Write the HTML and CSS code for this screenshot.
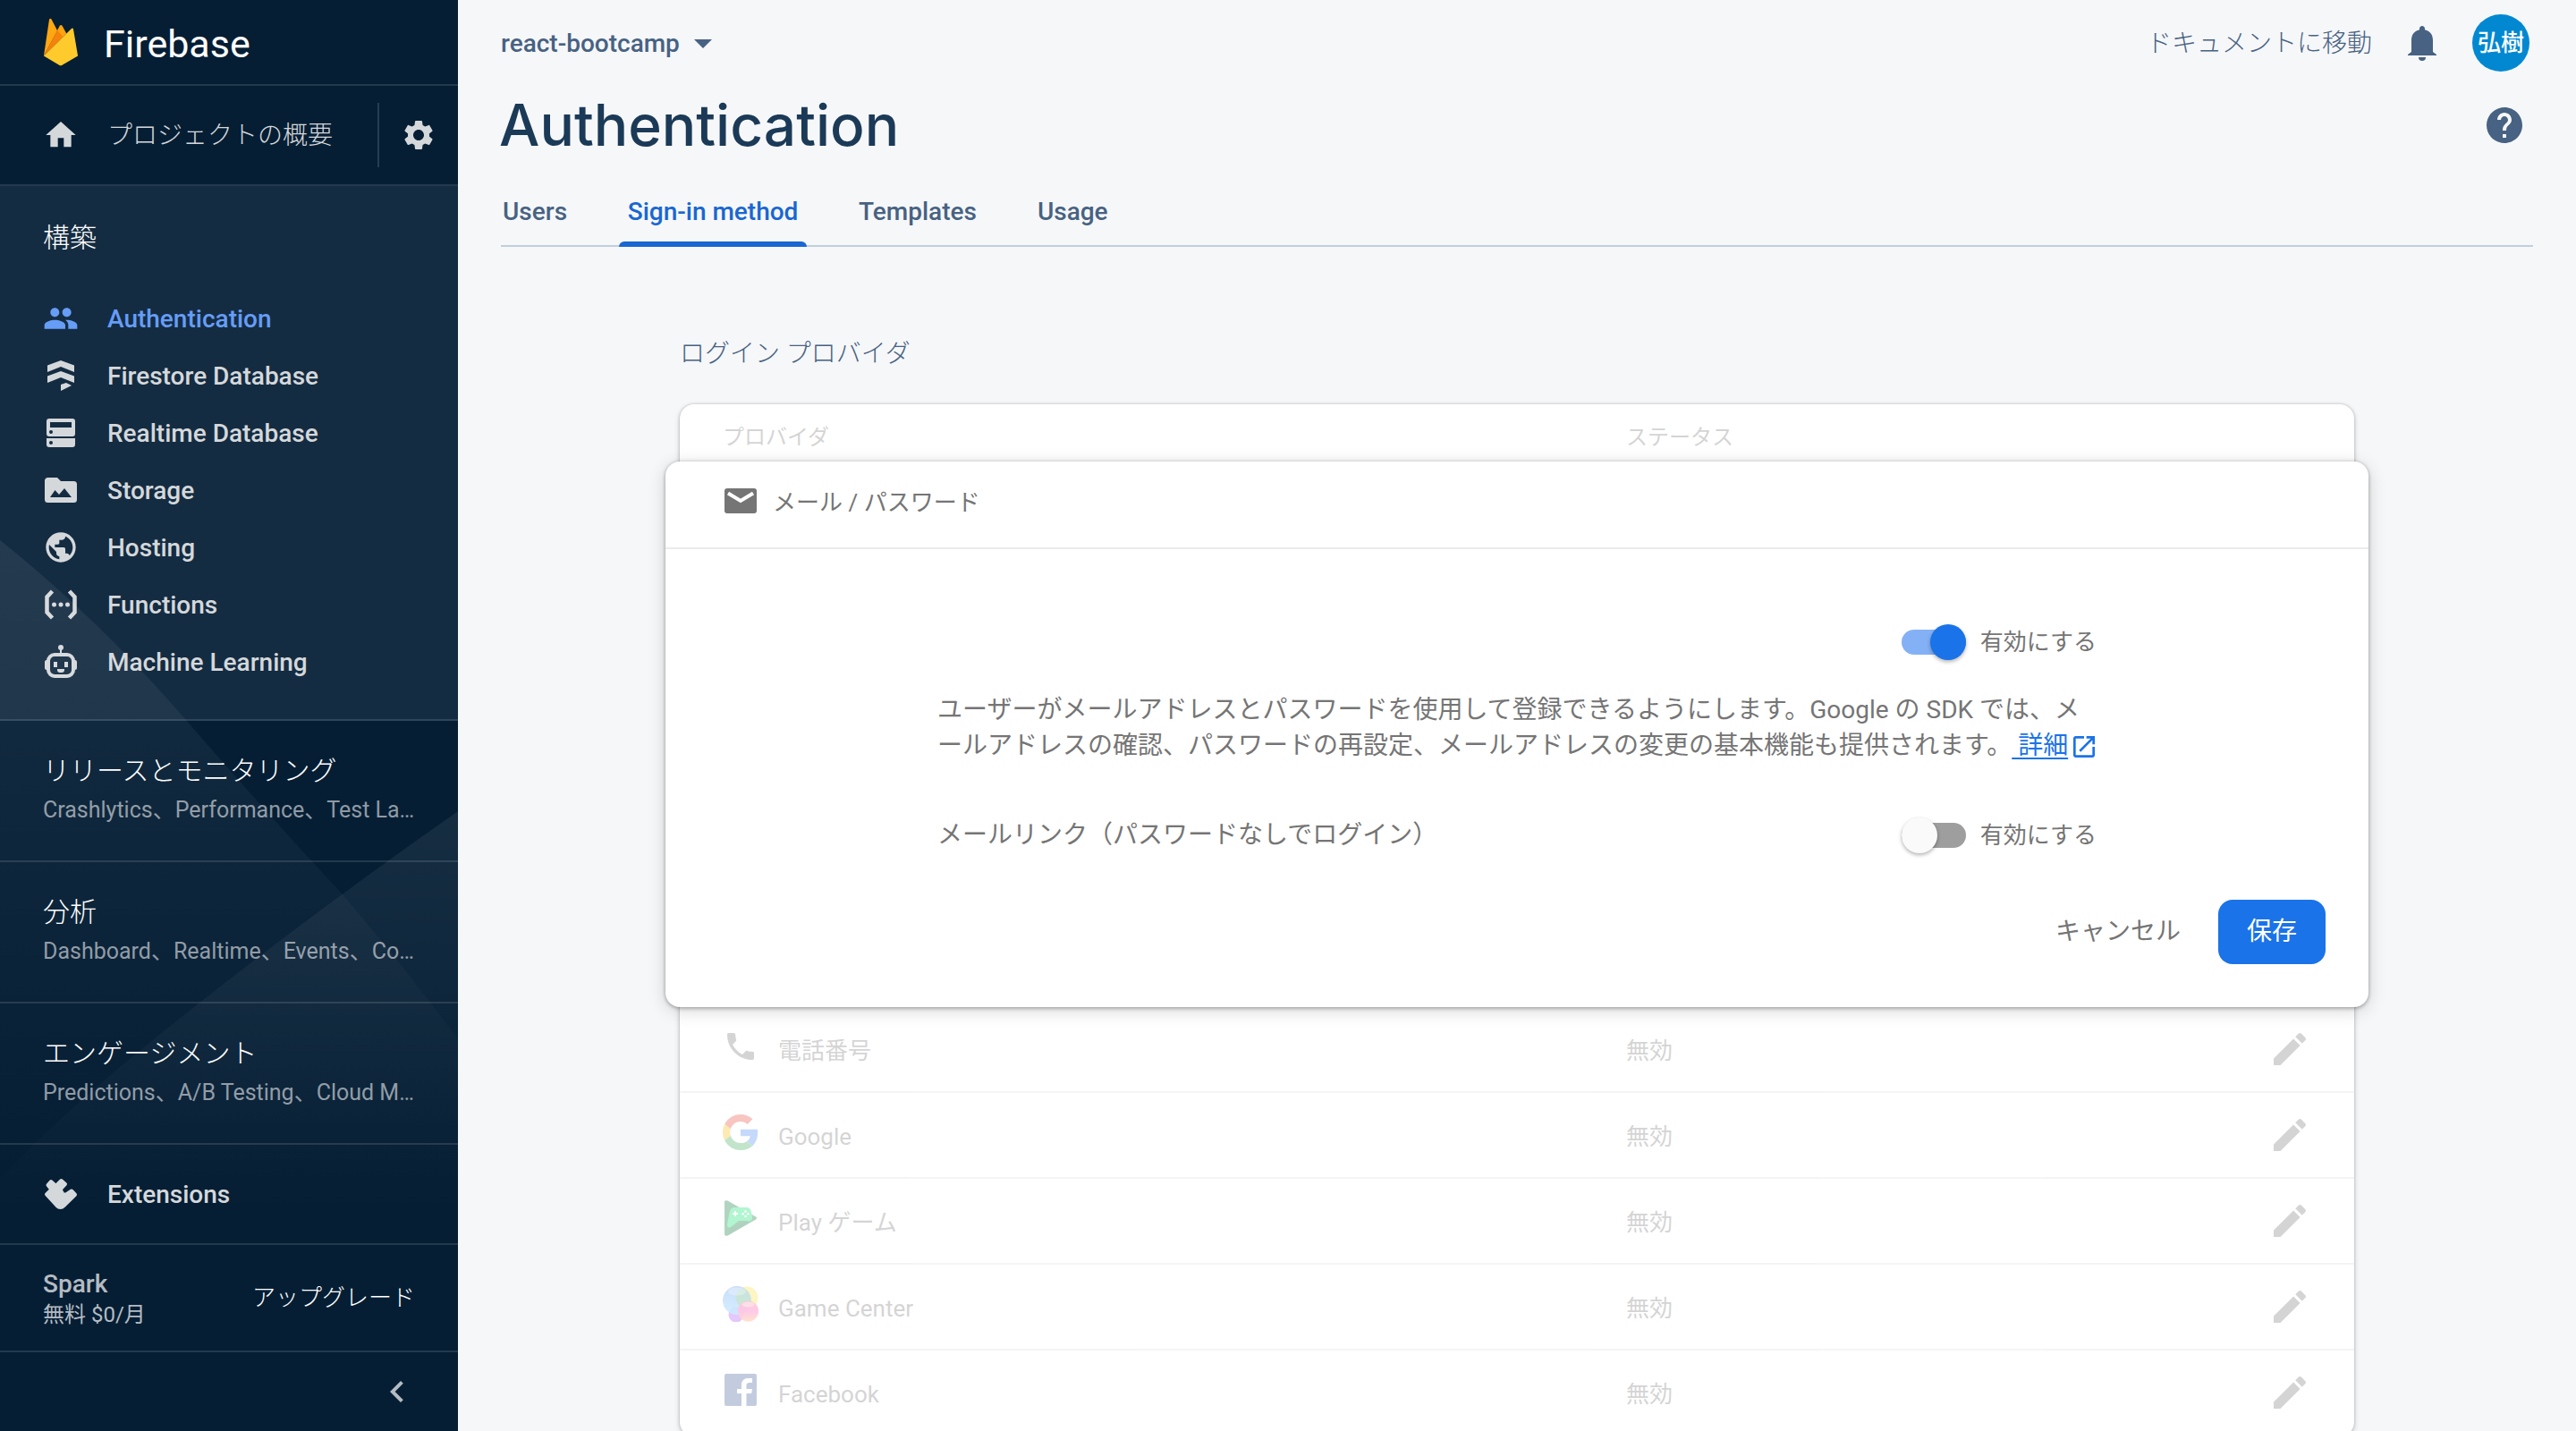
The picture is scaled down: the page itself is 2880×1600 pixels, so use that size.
FILE: index.html
```html
<!DOCTYPE html>
<html lang="ja">
<head>
<meta charset="utf-8">
<title>Authentication - Firebase</title>
<link rel="stylesheet" href="styles.css">
</head>
<body>
<div class="app">
  <aside class="sidebar">
    <svg class="backdrop" viewBox="0 0 512 1000" aria-hidden="true">
      <defs>
        <linearGradient id="g1" gradientUnits="userSpaceOnUse" x1="0" y1="0" x2="0" y2="720"><stop offset="0" stop-color="#fff" stop-opacity=".07"/><stop offset="1" stop-color="#fff" stop-opacity="0"/></linearGradient>
        <linearGradient id="g2" gradientUnits="userSpaceOnUse" x1="0" y1="300" x2="0" y2="760"><stop offset="0" stop-color="#fff" stop-opacity=".07"/><stop offset="1" stop-color="#fff" stop-opacity="0"/></linearGradient>
      </defs>
      <path d="M0 4Q110 92 207 204T381 398Q450 478 512 562V1000H0z" fill="url(#g1)"/>
      <path d="M512 307Q370 406 222 522T0 718V1000H512z" fill="url(#g2)"/>
    </svg>
    <a class="brand" href="#">
      <svg class="brand-mark" viewBox="147 58 115 160" aria-hidden="true">
        <path d="M148 184L166 64Q168 57 173 62L193 100z" fill="#ffa712"/>
        <path d="M193 99L201 84Q205 79 209 84L223 110L200 132z" fill="#ffa40f"/>
        <path d="M148 184L193 99L212 121z" fill="#f4820c"/>
        <path d="M148 184L239 94Q245 89 246 96L261 184L209 214Q204 217 199 214z" fill="#ffca2c"/>
      </svg>
      <span class="brand-name">Firebase</span>
    </a>
    <div class="project-row">
      <a class="nav-link" href="#">
        <svg class="icon" viewBox="0 0 24 24"><path d="M10 20v-6h4v6h5v-8h3L12 3 2 12h3v8z"/></svg>
        <span>プロジェクトの概要</span>
      </a>
      <button class="settings" type="button" aria-label="設定">
        <svg class="icon" viewBox="0 0 24 24"><path d="M19.14 12.94c.04-.3.06-.61.06-.94 0-.32-.02-.64-.07-.94l2.03-1.58c.18-.14.23-.41.12-.61l-1.92-3.32c-.12-.22-.37-.29-.59-.22l-2.39.96c-.5-.38-1.03-.7-1.62-.94l-.36-2.54c-.04-.24-.24-.41-.48-.41h-3.84c-.24 0-.43.17-.47.41l-.36 2.54c-.59.24-1.13.57-1.62.94l-2.39-.96c-.22-.08-.47 0-.59.22L2.74 8.87c-.12.21-.08.47.12.61l2.03 1.58c-.05.3-.09.63-.09.94s.02.64.07.94l-2.03 1.58c-.18.14-.23.41-.12.61l1.92 3.32c.12.22.37.29.59.22l2.39-.96c.5.38 1.03.7 1.62.94l.36 2.54c.05.24.24.41.48.41h3.84c.24 0 .44-.17.47-.41l.36-2.54c.59-.24 1.13-.56 1.62-.94l2.39.96c.22.08.47 0 .59-.22l1.92-3.32c.12-.22.07-.47-.12-.61l-2.01-1.58zM12 15.6c-1.98 0-3.6-1.62-3.6-3.6s1.62-3.6 3.6-3.6 3.6 1.62 3.6 3.6-1.62 3.6-3.6 3.6z"/></svg>
      </button>
    </div>
    <nav class="build">
      <h2 class="group-title">構築</h2>
      <a class="nav-link active" href="#">
        <svg class="icon" viewBox="0 0 24 24"><path d="M16 11c1.66 0 2.99-1.34 2.99-3S17.66 5 16 5c-1.66 0-3 1.34-3 3s1.34 3 3 3zm-8 0c1.66 0 2.99-1.34 2.99-3S9.66 5 8 5C6.34 5 5 6.34 5 8s1.34 3 3 3zm0 2c-2.33 0-7 1.17-7 3.5V19h14v-2.500c0-2.330-4.670-3.500-7-3.500zm8 0c-.29 0-.62.02-.97.05 1.16.84 1.970 1.970 1.970 3.450V19h6v-2.500c0-2.330-4.670-3.500-7-3.500z"/></svg>
        <span>Authentication</span>
      </a>
      <a class="nav-link" href="#">
        <svg class="icon" viewBox="0 0 40 40"><path d="M5 8.500L20 3l15 5.500V16L20 10 5 16zM5 20.500L20 15l15 5.500V28L20 22 5 28zM20 30l6-2 6 3-12 6z"/></svg>
        <span>Firestore Database</span>
      </a>
      <a class="nav-link" href="#">
        <svg class="icon" viewBox="0 0 40 40"><path fill-rule="evenodd" d="M7 4h26a3 3 0 0 1 3 3v14a3 3 0 0 1-3 3H7a3 3 0 0 1-3-3V7a3 3 0 0 1 3-3zm1 4v6h24V8zm1 9a2 2 0 1 0 0 4 2 2 0 0 0 0-4zM4 26h32v7a3 3 0 0 1-3 3H7a3 3 0 0 1-3-3zm5 3a2 2 0 1 0 0 4 2 2 0 0 0 0-4z"/></svg>
        <span>Realtime Database</span>
      </a>
      <a class="nav-link" href="#">
        <svg class="icon" viewBox="0 0 40 40"><path fill-rule="evenodd" d="M6 6h10l4 4h14.500a3.500 3.500 0 0 1 3.500 3.500V30.500a3.500 3.500 0 0 1-3.500 3.500h-29A3.500 3.500 0 0 1 2 30.500V9.500A3.500 3.500 0 0 1 6 6zm2 22h24l-8-10-6 7-4.500-5z"/></svg>
        <span>Storage</span>
      </a>
      <a class="nav-link" href="#">
        <svg class="icon" viewBox="0 0 24 24"><path d="M12 2C6.480 2 2 6.480 2 12s4.480 10 10 10 10-4.480 10-10S17.520 2 12 2zm-1 17.930c-3.950-.49-7-3.850-7-7.930 0-.62.08-1.210.21-1.790L9 15v1c0 1.100.9 2 2 2v1.930zm6.900-2.540c-.26-.81-1-1.390-1.900-1.390h-1v-3c0-.55-.45-1-1-1H8v-2h2c.55 0 1-.45 1-1V7h2c1.100 0 2-.9 2-2v-.41c2.930 1.190 5 4.060 5 7.410 0 2.080-.8 3.970-2.100 5.390z"/></svg>
        <span>Hosting</span>
      </a>
      <a class="nav-link" href="#">
        <svg class="icon" viewBox="0 0 40 40"><path d="M10.500 5L4.500 11.500V28.500L10.500 35M29.500 5L35.500 11.500V28.500L29.500 35" fill="none" stroke="currentColor" stroke-width="4.500"/><circle cx="12.500" cy="20" r="2.500"/><circle cx="20" cy="20" r="2.500"/><circle cx="27.500" cy="20" r="2.500"/></svg>
        <span>Functions</span>
      </a>
      <a class="nav-link" href="#">
        <svg class="icon" viewBox="0 0 40 40"><rect x="6" y="12" width="28" height="24" rx="7" fill="none" stroke="currentColor" stroke-width="4"/><circle cx="20" cy="4" r="3"/><path d="M19 5h2v6h-2zM5 18v11H4a2 2 0 0 1-2-2v-7a2 2 0 0 1 2-2zM35 18v11h1a2 2 0 0 0 2-2v-7a2 2 0 0 0-2-2zM12 20h4v6h-4zM24 20h4v6h-4zM16 28h8v1a3 3 0 0 1-3 3h-2a3 3 0 0 1-3-3z"/></svg>
        <span>Machine Learning</span>
      </a>
    </nav>
    <a class="category" href="#"><span class="category-title">リリースとモニタリング</span><span class="category-items">Crashlytics、Performance、Test La…</span></a>
    <a class="category" href="#"><span class="category-title">分析</span><span class="category-items">Dashboard、Realtime、Events、Co…</span></a>
    <a class="category" href="#"><span class="category-title">エンゲージメント</span><span class="category-items">Predictions、A/B Testing、Cloud M…</span></a>
    <div class="extensions">
      <a class="nav-link" href="#">
        <svg class="icon" viewBox="0 0 40 40"><path d="M4 20.500L9.500 15 5.500 10 9 6 14.500 11 20.500 5 25 9 19.500 15 22.500 20.500 26 20.500 32 16.500 36 20.700 23.500 33Q19.500 37 15.500 33z" stroke="currentColor" stroke-width="4" stroke-linejoin="round"/></svg>
        <span>Extensions</span>
      </a>
    </div>
    <div class="plan">
      <div class="plan-info"><strong class="plan-name">Spark</strong><span class="plan-price">無料 $0/月</span></div>
      <a class="upgrade" href="#">アップグレード</a>
    </div>
    <div class="collapse-row">
      <button class="collapse" type="button" aria-label="メニューを閉じる"><svg class="icon-l" viewBox="0 0 24 24"><path d="M15.410 7.410L14 6l-6 6 6 6 1.410-1.410L10.830 12z"/></svg></button>
    </div>
  </aside>

  <main class="main">
    <header class="topbar">
      <button class="project" type="button">react-bootcamp<svg class="caret" viewBox="0 0 20 10" aria-hidden="true"><path d="M0 0h20L10 10z"/></svg></button>
      <div class="topbar-actions">
        <a class="docs" href="#">ドキュメントに移動</a>
        <button class="plain" type="button" aria-label="通知"><svg class="icon-l" viewBox="0 0 24 24"><path d="M18 17v-6.500c0-3.070-1.640-5.140-4.500-5.820V4c0-.83-.67-1.500-1.500-1.500s-1.500.67-1.500 1.500v.68C7.630 5.360 6 7.420 6 10.500V17l-2 1.500V19h16v-.5zM10 20h4a2 2 0 0 1-4 0z"/></svg></button>
        <button class="avatar" type="button">弘樹</button>
      </div>
    </header>
    <div class="title-row">
      <h1 class="title">Authentication</h1>
      <button class="plain" type="button" aria-label="ヘルプ"><svg class="icon-l" viewBox="0 0 24 24"><path d="M12 2C6.480 2 2 6.480 2 12s4.480 10 10 10 10-4.480 10-10S17.520 2 12 2zm1 17h-2v-2h2v2zm2.070-7.750l-.9.920C13.450 12.900 13 13.500 13 15h-2v-.5c0-1.100.45-2.100 1.170-2.830l1.240-1.260c.37-.36.59-.86.59-1.410 0-1.100-.9-2-2-2s-2 .9-2 2H8c0-2.210 1.790-4 4-4s4 1.790 4 4c0 .88-.36 1.680-.93 2.250z"/></svg></button>
    </div>
    <nav class="tabs">
      <a class="tab" href="#">Users</a>
      <a class="tab current" href="#">Sign-in method</a>
      <a class="tab" href="#">Templates</a>
      <a class="tab" href="#">Usage</a>
    </nav>

    <section class="content">
      <h2 class="section-title">ログイン プロバイダ</h2>
      <div class="card">
        <table class="providers">
          <thead>
            <tr class="faded"><th class="col-name">プロバイダ</th><th>ステータス</th><th class="col-edit"></th></tr>
          </thead>
          <tbody>
            <tr>
              <td class="expanded" colspan="3">
                <form class="panel">
                  <div class="panel-head">
                    <svg class="provider-icon" viewBox="0 0 40 40" aria-hidden="true"><rect x="2" y="2" width="36" height="28" rx="3"/><path d="M6 7.500L20 16L34 7.500" fill="none" stroke="#fff" stroke-width="4"/></svg>
                    <span>メール / パスワード</span>
                  </div>
                  <div class="panel-body">
                    <div class="option option-end">
                      <label class="switch-label"><input class="switch" type="checkbox" role="switch" checked>有効にする</label>
                    </div>
                    <p class="description">ユーザーがメールアドレスとパスワードを使用して登録できるようにします。Google の SDK では、メールアドレスの確認、パスワードの再設定、メールアドレスの変更の基本機能も提供されます。<a class="more" href="#">&nbsp;詳細<svg class="external" viewBox="3 3 18 18" aria-hidden="true"><path d="M19 19H5V5h7V3H5c-1.110 0-2 .9-2 2v14c0 1.100.89 2 2 2h14c1.100 0 2-.9 2-2v-7h-2v7zM14 3v2h3.590l-9.830 9.830 1.410 1.410L19 6.410V10h2V3h-7z"/></svg></a></p>
                    <div class="option">
                      <span>メールリンク（パスワードなしでログイン）</span>
                      <label class="switch-label"><input class="switch" type="checkbox" role="switch">有効にする</label>
                    </div>
                  </div>
                  <div class="panel-actions">
                    <button class="cancel" type="button">キャンセル</button>
                    <button class="save" type="submit">保存</button>
                  </div>
                </form>
              </td>
            </tr>
            <tr class="faded row">
              <td><div class="provider"><svg class="provider-icon" viewBox="0 0 24 24"><path d="M6.620 10.790c1.440 2.830 3.760 5.140 6.590 6.590l2.200-2.200c.27-.27.67-.36 1.020-.24 1.120.37 2.330.57 3.570.57.55 0 1 .45 1 1V20c0 .55-.45 1-1 1-9.390 0-17-7.610-17-17 0-.55.45-1 1-1h3.500c.55 0 1 .45 1 1 0 1.250.2 2.450.57 3.570.11.35.03.74-.25 1.020l-2.200 2.200z"/></svg><span>電話番号</span></div></td>
              <td class="status">無効</td>
              <td class="edit"><button class="plain" type="button" aria-label="編集"><svg class="icon-l" viewBox="0 0 24 24"><path d="M3 17.250V21h3.750L17.810 9.940l-3.750-3.750L3 17.250zM20.710 7.040c.39-.39.39-1.020 0-1.410l-2.340-2.340c-.39-.39-1.020-.39-1.410 0l-1.830 1.830 3.750 3.750 1.830-1.830z"/></svg></button></td>
            </tr>
            <tr class="faded row">
              <td><div class="provider"><svg class="provider-icon" viewBox="0 0 48 48"><path fill="#ea4335" d="M24 9.500c3.540 0 6.710 1.220 9.210 3.600l6.850-6.850C35.900 2.380 30.470 0 24 0 14.620 0 6.510 5.380 2.560 13.220l7.980 6.190C12.430 13.720 17.740 9.500 24 9.500z"/><path fill="#4285f4" d="M46.980 24.550c0-1.570-.15-3.090-.38-4.550H24v9.020h12.940c-.58 2.960-2.260 5.480-4.780 7.180l7.730 6c4.510-4.180 7.090-10.360 7.090-17.650z"/><path fill="#fbbc05" d="M10.530 28.590c-.48-1.450-.76-2.990-.76-4.590s.27-3.140.76-4.590l-7.980-6.190C.92 16.460 0 20.120 0 24c0 3.880.92 7.540 2.560 10.780l7.970-6.190z"/><path fill="#34a853" d="M24 48c6.480 0 11.930-2.130 15.890-5.810l-7.730-6c-2.150 1.450-4.920 2.300-8.160 2.300-6.260 0-11.570-4.220-13.470-9.910l-7.980 6.190C6.510 42.620 14.620 48 24 48z"/></svg><span>Google</span></div></td>
              <td class="status">無効</td>
              <td class="edit"><button class="plain" type="button" aria-label="編集"><svg class="icon-l" viewBox="0 0 24 24"><path d="M3 17.250V21h3.750L17.810 9.940l-3.750-3.750L3 17.250zM20.710 7.040c.39-.39.39-1.020 0-1.410l-2.340-2.340c-.39-.39-1.020-.39-1.410 0l-1.830 1.830 3.750 3.750 1.830-1.830z"/></svg></button></td>
            </tr>
            <tr class="faded row">
              <td><div class="provider"><svg class="provider-icon" viewBox="0 0 40 40"><path fill="#027334" d="M2 1.500Q3 -.5 5.500 .5L37 18.500Q39 20 37 21.500L5.500 39.500Q3 40.500 2 38.500z"/><path fill="#025a28" d="M9 30L32 21 24 28.500 5 40z" opacity=".35"/><path fill="#00e169" d="M13 8H27C31 8 32 12 33 18C33.500 23 30 24.500 27 23H18L9 30Q5 32 5 27L7.500 14Q8.500 8 13 8z"/><path d="M14 12v6M11 15h6" stroke="#fff" stroke-width="2"/><g fill="#fff"><circle cx="25.500" cy="12.500" r="1.300"/><circle cx="25.500" cy="18" r="1.300"/><circle cx="22.700" cy="15.200" r="1.300"/><circle cx="28.300" cy="15.200" r="1.300"/></g></svg><span>Play ゲーム</span></div></td>
              <td class="status">無効</td>
              <td class="edit"><button class="plain" type="button" aria-label="編集"><svg class="icon-l" viewBox="0 0 24 24"><path d="M3 17.250V21h3.750L17.810 9.940l-3.750-3.750L3 17.250zM20.710 7.040c.39-.39.39-1.020 0-1.410l-2.340-2.340c-.39-.39-1.020-.39-1.410 0l-1.830 1.830 3.750 3.750 1.830-1.830z"/></svg></button></td>
            </tr>
            <tr class="faded row">
              <td><div class="provider"><svg class="provider-icon" viewBox="0 0 40 40"><defs><linearGradient id="gb" x2="0" y2="1"><stop stop-color="#3f84ee"/><stop offset="1" stop-color="#5cc4ff"/></linearGradient><linearGradient id="gp" x2="0" y2="1"><stop stop-color="#ff4f6c"/><stop offset=".5" stop-color="#ff40b0"/><stop offset="1" stop-color="#ff9a50"/></linearGradient></defs><circle cx="27" cy="13" r="12.500" fill="#fbe13a"/><circle cx="15" cy="32" r="8.500" fill="#a848f5"/><circle cx="16" cy="16" r="16" fill="url(#gb)" opacity=".88"/><path d="M18 4A12.500 12.500 0 0 0 21 23.500L31 20A16 16 0 0 0 22 2z" fill="#4caf6c" opacity=".75"/><circle cx="28.500" cy="28" r="11.500" fill="url(#gp)" opacity=".92"/><ellipse cx="16" cy="6" rx="10" ry="4.500" fill="#fff" opacity=".3"/><ellipse cx="28.500" cy="20.500" rx="7" ry="3" fill="#fff" opacity=".4"/></svg><span>Game Center</span></div></td>
              <td class="status">無効</td>
              <td class="edit"><button class="plain" type="button" aria-label="編集"><svg class="icon-l" viewBox="0 0 24 24"><path d="M3 17.250V21h3.750L17.810 9.940l-3.750-3.750L3 17.250zM20.710 7.040c.39-.39.39-1.020 0-1.410l-2.340-2.340c-.39-.39-1.020-.39-1.410 0l-1.830 1.830 3.750 3.750 1.830-1.830z"/></svg></button></td>
            </tr>
            <tr class="faded row">
              <td><div class="provider"><svg class="provider-icon" viewBox="0 0 40 40"><rect x="2" y="2" width="36" height="36" rx="2" fill="#3b5998"/><path fill="#fff" d="M21 38V24h-5v-5h5v-4.500C21 9.500 24 7 28.500 7H33v5h-3c-2.500 0-3.500 1-3.500 3v4H33l-.8 5H26.500V38z"/></svg><span>Facebook</span></div></td>
              <td class="status">無効</td>
              <td class="edit"><button class="plain" type="button" aria-label="編集"><svg class="icon-l" viewBox="0 0 24 24"><path d="M3 17.250V21h3.750L17.810 9.940l-3.750-3.750L3 17.250zM20.710 7.040c.39-.39.39-1.020 0-1.410l-2.340-2.340c-.39-.39-1.020-.39-1.410 0l-1.830 1.830 3.750 3.750 1.830-1.830z"/></svg></button></td>
            </tr>
          </tbody>
        </table>
      </div>
    </section>
  </main>
</div>
</body>
</html>
```
FILE: styles.css
```css
* { box-sizing: border-box; }

body {
  margin: 0;
  background: #f6f7f9;
  color: #757575;
  font-family: Roboto, "Noto Sans CJK JP", sans-serif;
  font-size: 28px;
  line-height: 40px;
}

h1, h2, p { margin: 0; font-weight: 400; }
a { color: inherit; text-decoration: none; }
svg { display: block; fill: currentColor; flex: none; }
button {
  padding: 0;
  border: 0;
  background: none;
  color: inherit;
  font: inherit;
  cursor: pointer;
}

.app { display: flex; height: 100vh; }
.icon { width: 40px; height: 40px; }
.icon-l { width: 48px; height: 48px; }

/* Sidebar */
.sidebar {
  position: relative;
  display: flex;
  flex-direction: column;
  flex: 0 0 512px;
  background: #051e34;
  color: #d5d8db;
  overflow: hidden;
}
.sidebar > * { flex: none; }
.backdrop {
  position: absolute;
  left: 0;
  bottom: 0;
  width: 100%;
  pointer-events: none;
}
.brand, .project-row, .build, .category, .extensions, .plan {
  border-bottom: 2px solid rgba(255, 255, 255, .12);
}
.brand {
  display: flex;
  align-items: center;
  gap: 28px;
  height: 96px;
  padding: 0 48px;
  color: #fff;
}
.brand-mark { width: 40px; height: 54px; }
.brand-name { padding-top: 4px; font-family: Roboto, sans-serif; font-size: 43px; }
.project-row { display: flex; align-items: center; height: 112px; }
.project-row .nav-link { flex: 1; }
.settings {
  display: grid;
  place-items: center;
  width: 90px;
  height: 72px;
  border-left: 2px solid rgba(255, 255, 255, .14);
}
.nav-link {
  display: flex;
  align-items: center;
  gap: 32px;
  height: 64px;
  padding-left: 48px;
  font-weight: 500;
}
.nav-link span { padding-top: 2px; }
.project-row .nav-link { font-weight: 300; }
.nav-link.active { color: #669df6; }
.build { padding: 36px 0 32px; background: rgba(160, 180, 200, .1); }
.group-title {
  margin-bottom: 36px;
  padding-left: 48px;
  color: #fff;
  font-size: 30px;
  font-weight: 300;
  line-height: 44px;
}
.category {
  display: flex;
  flex-direction: column;
  padding: 34px 48px;
  line-height: 44px;
}
.category-title { color: #fff; font-size: 30px; font-weight: 300; }
.category-items { color: #8f9aa5; font-size: 25px; white-space: nowrap; }
.extensions { padding: 23px 0; }
.plan {
  display: flex;
  align-items: center;
  justify-content: space-between;
  height: 120px;
  padding: 0 48px;
}
.plan-info { display: flex; flex-direction: column; padding-top: 4px; color: #b4bbc2; line-height: 34px; }
.plan-name { font-weight: 500; }
.plan-price { font-size: 24px; }
.upgrade { color: #fff; font-size: 26px; font-weight: 300; }
.collapse-row { display: flex; justify-content: flex-end; padding: 20px 44px; color: #b4bbc2; }

/* Header */
.main { flex: 1; min-width: 0; overflow-y: auto; scrollbar-width: none; }
.topbar, .title-row {
  display: flex;
  align-items: center;
  justify-content: space-between;
  color: #476282;
}
.topbar { height: 96px; padding: 0 52px 0 48px; }
.project { display: flex; align-items: center; gap: 16px; padding-top: 2px; font-weight: 500; }
.caret { width: 20px; height: 10px; }
.topbar-actions { display: flex; align-items: center; gap: 32px; }
.docs { padding-top: 2px; font-weight: 300; }
.avatar {
  width: 64px;
  height: 64px;
  border-radius: 50%;
  background: #0288d1;
  color: #fff;
  font-size: 26px;
  font-weight: 500;
}
.title-row { height: 88px; padding: 0 56px 0 46px; }
.title {
  color: #1b3a57;
  font-family: Inter, sans-serif;
  font-size: 64px;
  font-weight: 500;
  line-height: 80px;
}
.tabs {
  display: flex;
  gap: 48px;
  margin: 0 48px;
  padding-top: 16px;
  border-bottom: 2px solid #c1cfdd;
}
.tab {
  display: flex;
  flex-direction: column;
  justify-content: space-between;
  height: 76px;
  margin-bottom: -2px;
  padding-top: 17px;
  color: #476282;
  font-weight: 500;
  text-indent: 10px;
  padding-right: 10px;
}
.tab:first-child { text-indent: 2px; }
.tab.current {
  padding-right: 0;
  color: #1967d2;
}
.tab.current { text-indent: 0; text-align: center; padding-left: 0; min-width: 210px; }
.tab.current::after {
  content: "";
  height: 6px;
  border-radius: 6px 6px 0 0;
  background: #1967d2;
}
.plain { display: block; }

/* Providers */
.content { max-width: 1968px; margin: 0 auto; padding: 100px 48px 0; }
.section-title { color: #476282; font-size: 28px; font-weight: 300; line-height: 40px; }
.card {
  margin-top: 36px;
  border-radius: 16px;
  background: #fff;
  box-shadow: 0 2px 6px rgba(0, 0, 0, .2), 0 0 3px rgba(0, 0, 0, .2);
}
.providers {
  width: 100%;
  border-collapse: separate;
  border-spacing: 0;
  table-layout: fixed;
  font-size: 26px;
}
.col-name { width: 1058px; }
.col-edit { width: 96px; }
.providers th {
  height: 64px;
  padding: 10px 0 0;
  font-size: 24px;
  font-weight: 400;
  line-height: 36px;
  text-align: left;
}
.providers .col-name { padding-left: 48px; }
.faded { opacity: .3; }
.row td { height: 96px; padding: 0; border-bottom: 2px solid #dedede; }
.provider { display: flex; align-items: center; gap: 22px; padding: 4px 0 0 48px; }
.provider .provider-icon { margin-bottom: 10px; }
.provider-icon { width: 40px; height: 40px; }
.row .status { padding-top: 4px; }
.expanded { padding: 0; }

.panel {
  position: relative;
  z-index: 1;
  margin: 0 -16px;
  border-radius: 16px;
  background: #fff;
  box-shadow: 0 2px 4px rgba(0, 0, 0, .2), 0 4px 20px rgba(0, 0, 0, .16), 0 0 4px rgba(0, 0, 0, .16);
}
.panel-head {
  display: flex;
  align-items: center;
  gap: 16px;
  height: 98px;
  padding: 0 64px 4px;
  border-bottom: 2px solid #ebebeb;
}
.panel-head .provider-icon { margin-top: 4px; }
.panel-body { max-width: 1296px; margin: 0 auto; padding-top: 84px; font-size: 28px; }
.option { display: flex; align-items: center; justify-content: space-between; height: 40px; }
.option-end { justify-content: flex-end; }
.description { margin: 36px -8px 60px 0; line-break: loose; }
.switch-label { display: flex; align-items: center; gap: 16px; font-size: 26px; }
.switch {
  position: relative;
  appearance: none;
  width: 72px;
  height: 28px;
  margin: 0;
  border-radius: 14px;
  background: #9e9e9e;
}
.switch::before {
  content: "";
  position: absolute;
  top: -6px;
  left: 0;
  width: 40px;
  height: 40px;
  border-radius: 50%;
  background: #fafafa;
  box-shadow: 0 2px 4px rgba(0, 0, 0, .3);
}
.switch:checked { background: #84b1f5; }
.switch:checked::before { left: 32px; background: #1a73e8; }
.more {
  color: #1a73e8;
  text-decoration: underline;
  text-underline-offset: 4px;
  white-space: nowrap;
}
.external { display: inline-block; width: 24px; height: 24px; margin-left: 6px; vertical-align: -4px; }
.panel-actions {
  display: flex;
  align-items: center;
  justify-content: flex-end;
  gap: 42px;
  padding: 52px 48px 48px;
}
.cancel, .save { height: 72px; font-size: 28px; }
.save { width: 120px; border-radius: 16px; background: #1a73e8; color: #fff; }
```
